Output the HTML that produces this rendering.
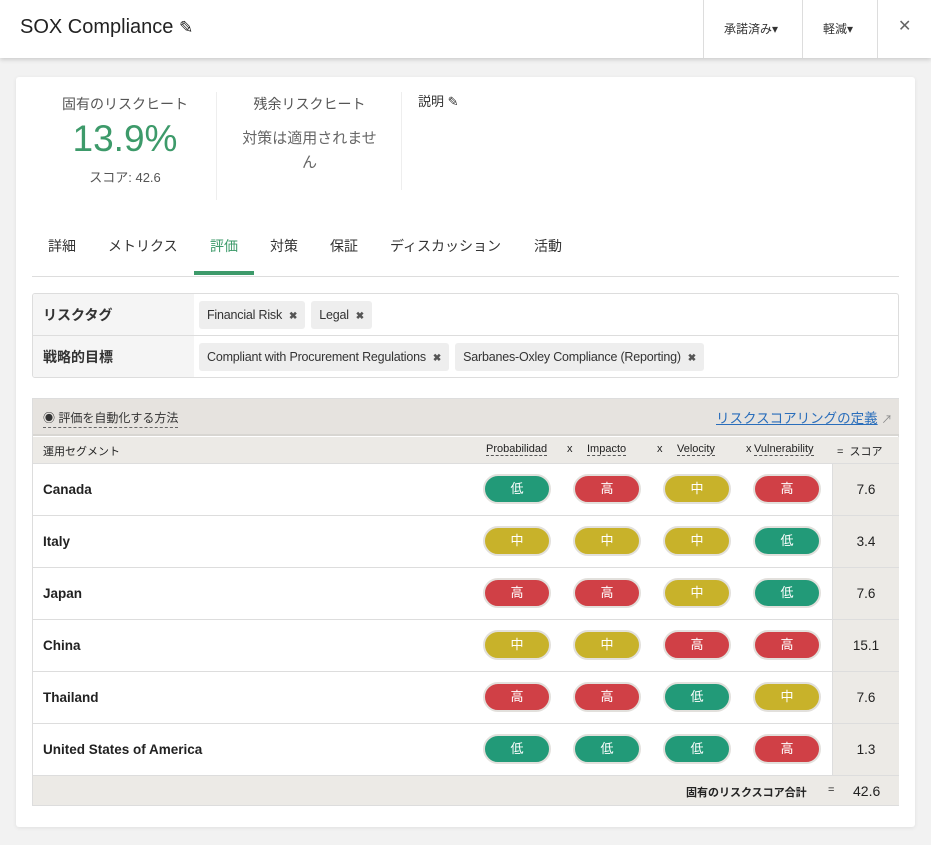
<!DOCTYPE html>
<html><head><meta charset="utf-8"><style>
*{box-sizing:border-box;margin:0;padding:0}
body{width:931px;height:845px;background:#f2f2f2;font-family:"Liberation Sans","Noto Sans CJK JP",sans-serif;color:#333;position:relative;overflow:hidden}
.a{position:absolute}
.hdr{left:0;top:0;width:931px;height:58px;background:#fff;box-shadow:0 2px 4px rgba(0,0,0,.15)}
.card{left:16px;top:77px;width:899px;height:750px;background:#fff;border-radius:3px;box-shadow:0 1px 4px rgba(0,0,0,.08)}
.pill{position:absolute;width:68px;height:30px;border-radius:15px;border:2px solid #e2e0dc;color:#fff;font-size:13px;text-align:center;line-height:26px}
.g{background:#229a78}.r{background:#d04046}.y{background:#c8b22a}
.tags{position:absolute;left:199px;display:flex;gap:6px}
.tag{height:28px;background:#eee;border-radius:3px;font-size:12.5px;line-height:28px;padding:0 8px;color:#333;letter-spacing:-0.2px;white-space:nowrap}
.tag b{font-size:10px;margin-left:7px;color:#555}
.row{position:absolute;left:33px;width:866px;height:52px;border-bottom:1px solid #ddd}
.row .n{position:absolute;left:10px;top:18px;font-size:13.5px;font-weight:bold;color:#222}
.row .s{position:absolute;left:799px;top:0;width:67px;height:51px;background:#eceae6;border-left:1px solid #ddd;text-align:center;line-height:51px;font-size:13.5px;color:#222}
</style></head><body>
<div class="a hdr">
 <div class="a" style="left:20px;top:16px;font-size:20px;color:#222">SOX Compliance <span style="font-size:17px">&#9998;</span></div>
 <div class="a" style="left:703px;top:0;width:1px;height:58px;background:#ddd"></div>
 <div class="a" style="left:802px;top:0;width:1px;height:58px;background:#ddd"></div>
 <div class="a" style="left:877px;top:0;width:1px;height:58px;background:#ddd"></div>
 <div class="a" style="left:724px;top:20px;font-size:12px">承諾済み▾</div>
 <div class="a" style="left:823px;top:20px;font-size:12px">軽減▾</div>
 <div class="a" style="left:898px;top:16px;font-size:16px;color:#666">✕</div>
</div>
<div class="a card"></div>
<div class="a" style="left:50px;top:94px;width:150px;text-align:center;font-size:14px;color:#555">固有のリスクヒート</div>
<div class="a" style="left:50px;top:118px;width:150px;text-align:center;font-size:37px;color:#3d9a6a">13.9%</div>
<div class="a" style="left:50px;top:167px;width:150px;text-align:center;font-size:13px;color:#555">スコア: 42.6</div>
<div class="a" style="left:216px;top:92px;width:1px;height:108px;background:#eee"></div>
<div class="a" style="left:232px;top:94px;width:155px;text-align:center;font-size:14px;color:#555">残余リスクヒート</div>
<div class="a" style="left:232px;top:127px;width:155px;text-align:center;font-size:15px;line-height:24px;color:#666">対策は適用されませ<br>ん</div>
<div class="a" style="left:401px;top:92px;width:1px;height:98px;background:#eee"></div>
<div class="a" style="left:418px;top:91px;font-size:13px;color:#333">説明 &#9998;</div>
<div class="a" style="left:48px;top:236px;font-size:14px;color:#333">詳細</div>
<div class="a" style="left:108px;top:236px;font-size:14px">メトリクス</div>
<div class="a" style="left:210px;top:236px;font-size:14px;color:#3d9a6a">評価</div>
<div class="a" style="left:270px;top:236px;font-size:14px">対策</div>
<div class="a" style="left:330px;top:236px;font-size:14px">保証</div>
<div class="a" style="left:390px;top:236px;font-size:14px">ディスカッション</div>
<div class="a" style="left:534px;top:236px;font-size:14px">活動</div>
<div class="a" style="left:32px;top:276px;width:867px;height:1px;background:#ddd"></div>
<div class="a" style="left:194px;top:271px;width:60px;height:4px;background:#3d9a6a"></div>
<div class="a" style="left:32px;top:293px;width:867px;height:85px;border:1px solid #ddd;border-radius:3px;overflow:hidden">
 <div class="a" style="left:0;top:0;width:161px;height:83px;background:#f5f5f5"></div>
 <div class="a" style="left:0;top:41px;width:867px;height:1px;background:#ddd"></div>
 <div class="a" style="left:10px;top:11px;font-size:14px;font-weight:bold">リスクタグ</div>
 <div class="a" style="left:10px;top:53px;font-size:14px;font-weight:bold">戦略的目標</div>
</div>
<div class="tags" style="top:301px"><div class="tag">Financial Risk<b>✖</b></div><div class="tag">Legal<b>✖</b></div></div>
<div class="tags" style="top:343px"><div class="tag">Compliant with Procurement Regulations<b>✖</b></div><div class="tag">Sarbanes-Oxley Compliance (Reporting)<b>✖</b></div></div>
<div class="a" style="left:32px;top:398px;width:867px;height:408px;border:1px solid #ddd;background:#fff"></div>
<div class="a" style="left:33px;top:399px;width:866px;height:37px;background:#e6e3df;border-bottom:2px solid #d8d6d2"></div>
<div class="a" style="left:43px;top:409px;font-size:12px;color:#333;border-bottom:1px dashed #666;padding-bottom:1px">◉ 評価を自動化する方法</div>
<div class="a" style="left:716px;top:407px;font-size:13.5px;color:#2a6ebb;white-space:nowrap"><span style="text-decoration:underline">リスクスコアリングの定義</span> <span style="color:#888;font-size:11px">↗</span></div>
<div class="a" style="left:33px;top:437px;width:866px;height:27px;background:#eceae6;border-bottom:1px solid #ddd;font-size:11px;color:#222">
 <span class="a" style="left:10px;top:6px">運用セグメント</span>
 <span class="a" style="left:453px;top:6px;border-bottom:1px dashed #555">Probabilidad</span>
 <span class="a" style="left:534px;top:6px">x</span>
 <span class="a" style="left:554px;top:6px;border-bottom:1px dashed #555">Impacto</span>
 <span class="a" style="left:624px;top:6px">x</span>
 <span class="a" style="left:644px;top:6px;border-bottom:1px dashed #555">Velocity</span>
 <span class="a" style="left:713px;top:6px">x</span>
 <span class="a" style="left:721px;top:6px;border-bottom:1px dashed #555">Vulnerability</span>
 <span class="a" style="left:804px;top:6px">=&nbsp; スコア</span>
</div>
<div class="row" style="top:464px"><span class="n">Canada</span><div class="pill g" style="left:450px;top:10px">低</div><div class="pill r" style="left:540px;top:10px">高</div><div class="pill y" style="left:630px;top:10px">中</div><div class="pill r" style="left:720px;top:10px">高</div><span class="s">7.6</span></div>
<div class="row" style="top:516px"><span class="n">Italy</span><div class="pill y" style="left:450px;top:10px">中</div><div class="pill y" style="left:540px;top:10px">中</div><div class="pill y" style="left:630px;top:10px">中</div><div class="pill g" style="left:720px;top:10px">低</div><span class="s">3.4</span></div>
<div class="row" style="top:568px"><span class="n">Japan</span><div class="pill r" style="left:450px;top:10px">高</div><div class="pill r" style="left:540px;top:10px">高</div><div class="pill y" style="left:630px;top:10px">中</div><div class="pill g" style="left:720px;top:10px">低</div><span class="s">7.6</span></div>
<div class="row" style="top:620px"><span class="n">China</span><div class="pill y" style="left:450px;top:10px">中</div><div class="pill y" style="left:540px;top:10px">中</div><div class="pill r" style="left:630px;top:10px">高</div><div class="pill r" style="left:720px;top:10px">高</div><span class="s">15.1</span></div>
<div class="row" style="top:672px"><span class="n">Thailand</span><div class="pill r" style="left:450px;top:10px">高</div><div class="pill r" style="left:540px;top:10px">高</div><div class="pill g" style="left:630px;top:10px">低</div><div class="pill y" style="left:720px;top:10px">中</div><span class="s">7.6</span></div>
<div class="row" style="top:724px"><span class="n">United States of America</span><div class="pill g" style="left:450px;top:10px">低</div><div class="pill g" style="left:540px;top:10px">低</div><div class="pill g" style="left:630px;top:10px">低</div><div class="pill r" style="left:720px;top:10px">高</div><span class="s">1.3</span></div>
<div class="a" style="left:33px;top:776px;width:866px;height:29px;background:#eceae6;font-size:11px;color:#222">
 <span class="a" style="left:653px;top:8px;font-weight:bold">固有のリスクスコア合計</span>
 <span class="a" style="left:795px;top:8px">=</span>
 <span class="a" style="left:820px;top:7px;font-size:14px">42.6</span>
</div>
</body></html>
